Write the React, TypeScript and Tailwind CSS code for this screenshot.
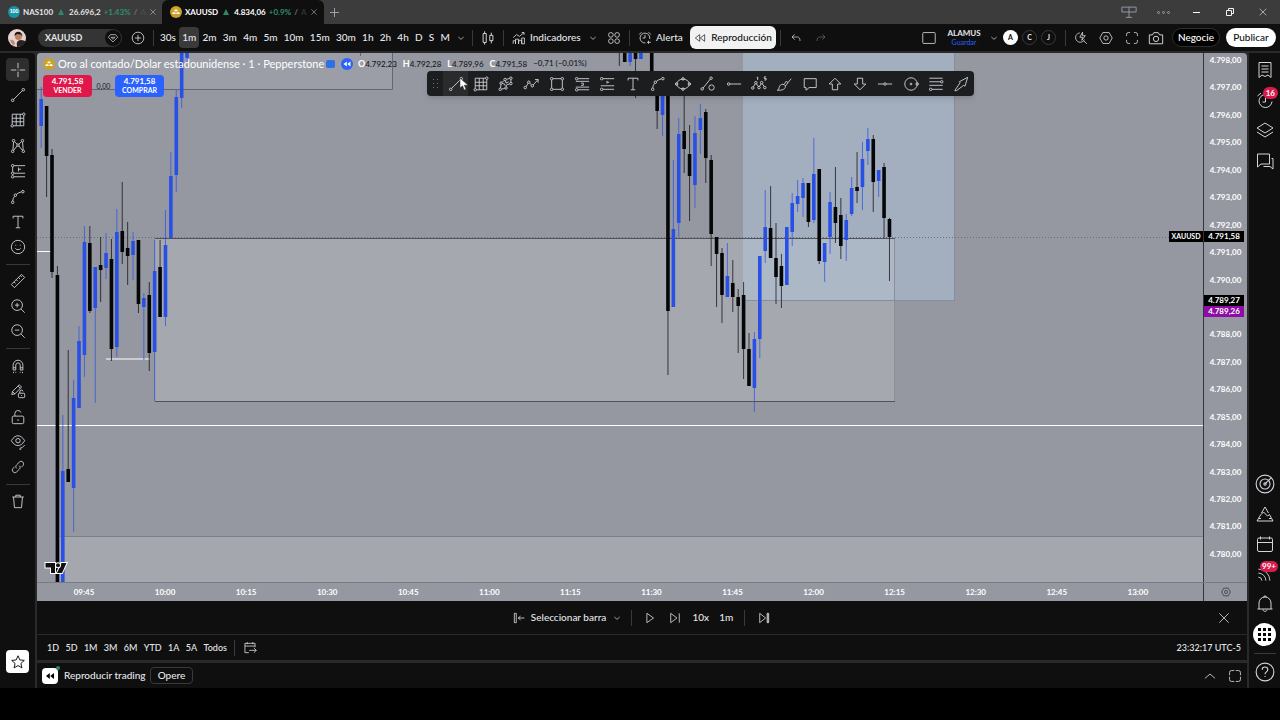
import type { ReactNode } from 'react'
import clsx from 'clsx'

// [minute index, is bullish, body top, body bottom, high, low]
type Candle = [number, 0 | 1, number, number, number, number]

const CANDLES: Candle[] = [
  [0, 1, 99, 126, 87, 148],
  [1, 0, 106, 156, 106, 197],
  [2, 0, 155, 272, 149, 278],
  [3, 0, 275, 590, 266, 590],
  [4, 1, 471, 590, 415, 590],
  [5, 0, 469, 482, 350, 482],
  [6, 1, 398, 488, 380, 532],
  [7, 1, 341, 408, 326, 408],
  [8, 1, 242, 355, 226, 377],
  [9, 0, 243, 311, 226, 313],
  [10, 1, 267, 308, 267, 403],
  [11, 0, 265, 270, 237, 302],
  [12, 1, 253, 268, 233, 279],
  [13, 0, 259, 349, 239, 361],
  [14, 1, 232, 347, 209, 357],
  [15, 0, 231, 252, 182, 264],
  [16, 0, 248, 256, 222, 285],
  [17, 1, 241, 255, 232, 280],
  [18, 0, 240, 304, 240, 313],
  [19, 1, 298, 307, 293, 360],
  [20, 0, 295, 353, 282, 371],
  [21, 1, 271, 352, 240, 401],
  [22, 0, 267, 317, 240, 317],
  [23, 1, 245, 317, 210, 326],
  [24, 1, 176, 238, 152, 238],
  [25, 1, 97, 175, 90, 192],
  [26, 1, 40, 98, 40, 108],
  [27, 1, 40, 58, 40, 62],
  [107, 0, 40, 50, 40, 66],
  [108, 0, 40, 62, 40, 62],
  [109, 1, 40, 62, 40, 66],
  [110, 0, 40, 59, 40, 98],
  [111, 1, 40, 59, 40, 59],
  [113, 0, 40, 80, 40, 90],
  [114, 0, 75, 111, 75, 129],
  [115, 1, 75, 115, 75, 136],
  [116, 0, 75, 311, 75, 375],
  [117, 1, 229, 307, 160, 307],
  [118, 1, 134, 223, 118, 237],
  [119, 0, 131, 149, 90, 173],
  [120, 0, 154, 176, 125, 221],
  [121, 1, 133, 185, 116, 208],
  [122, 1, 118, 130, 104, 154],
  [123, 0, 112, 158, 109, 183],
  [124, 0, 160, 234, 155, 266],
  [125, 0, 237, 254, 237, 307],
  [126, 0, 253, 295, 248, 323],
  [127, 1, 276, 297, 243, 297],
  [128, 0, 283, 297, 260, 312],
  [129, 0, 297, 306, 289, 353],
  [130, 0, 295, 349, 282, 379],
  [131, 0, 349, 386, 333, 386],
  [132, 1, 339, 388, 332, 412],
  [133, 1, 256, 339, 256, 358],
  [134, 1, 227, 251, 190, 263],
  [135, 0, 228, 258, 186, 258],
  [136, 0, 258, 277, 223, 304],
  [137, 0, 266, 286, 254, 308],
  [138, 1, 227, 285, 227, 285],
  [139, 1, 203, 232, 193, 246],
  [140, 1, 196, 204, 180, 212],
  [141, 1, 183, 198, 178, 217],
  [142, 0, 183, 222, 183, 227],
  [143, 1, 174, 220, 138, 223],
  [144, 0, 169, 261, 169, 264],
  [145, 1, 243, 262, 243, 282],
  [146, 1, 202, 237, 192, 254],
  [147, 0, 207, 223, 167, 243],
  [148, 0, 215, 246, 198, 259],
  [149, 1, 220, 240, 214, 261],
  [150, 1, 188, 214, 177, 216],
  [151, 0, 187, 191, 152, 203],
  [152, 1, 159, 187, 142, 210],
  [153, 1, 139, 151, 128, 165],
  [154, 0, 139, 182, 135, 212],
  [155, 1, 170, 181, 170, 197],
  [156, 0, 167, 218, 163, 238],
  [157, 0, 219, 237, 218, 281],
]

// 4.789,00 is left blank, the price tags sit there
const PRICES = Array.from({ length: 19 }, (_, i) => (i === 9 ? '' : `4.${798 - i},00`))
const TIMES = [
  '09:45', '10:00', '10:15', '10:30', '10:45', '11:00', '11:15',
  '11:30', '11:45', '12:00', '12:15', '12:30', '12:45', '13:00',
]
const INTERVALS = ['30s', '1m', '2m', '3m', '4m', '5m', '10m', '15m', '30m', '1h', '2h', '4h', 'D', 'S', 'M']
const RANGES = ['1D', '5D', '1M', '3M', '6M', 'YTD', '1A', '5A', 'Todos']

const dot = (cx: number, cy: number, r = 1.4) => <circle cx={cx} cy={cy} r={r} />

// every glyph is drawn on an 18x18 grid with a 1px stroke
const GLYPHS: Record<string, ReactNode> = {
  cross: <path d="M9 1v6M9 11v6M1 9h6M11 9h6M8.5 9h1" />,
  trend: <>{dot(3, 15)}{dot(15, 3)}<path d="M4 14 14 4" /></>,
  fibGrid: <><path d="M2.5 2.5v11.500M4 15.500h11.500V4M2.500 2.500H14M2.500 7h13M2.500 11h13M7 2.500v13M11.500 2.500v13" />{dot(15.5, 2.5)}{dot(2.5, 15.5)}</>,
  pattern: <>{dot(4, 3)}{dot(14, 3)}{dot(3, 15)}{dot(15, 15)}{dot(9, 8)}<path d="M4 4.500 3.300 13.500M5 4l3 3M13 4l-3 3M14.200 4.500l.6 9M4 14l4-5M14 14l-4-5" /></>,
  forecast: <>{dot(3, 3)}{dot(3, 11.5)}{dot(3, 15.5)}<path d="M4.500 3H17M4.500 11.500H17M4.500 15.500H17M3 4.500V10M9.500 5v4.500M9.500 7h3" /></>,
  measureRows: <>{dot(3, 3)}{dot(3, 15.5)}<path d="M4.500 3H17M2 6h15M2 12.500h15M4.500 15.500H17M8 8h2.500v2.500H8" /></>,
  rowsAlt: <>{dot(3, 3)}{dot(3, 15)}<path d="M4.500 3H17M2 11h15M4.500 15H17M9 5.500v3M9 7h2.500" /></>,
  curve: <>{dot(3, 15)}{dot(6, 7)}{dot(14.5, 3)}<path d="M3 13.500c.2-2 1-3.800 2-5.200M7.200 6C9 4.600 11 3.600 13 3.200" /></>,
  text: <path d="M3.500 5V2.500h11V5M9 2.500v13M6.500 15.500h5" />,
  smile: <><circle cx="9" cy="9" r="7.500" /><path d="M6 10.500c.8 2 5.200 2 6 0M6.500 6.500v1M11.500 6.500v1" /></>,
  ruler: <path d="M1.500 13 13 1.500 16.500 5 5 16.500zM4.500 10l1.800 1.800M7 7.500l1.800 1.800M9.500 5l1.800 1.800M11.800 3l1.500 1.500" />,
  zoomIn: <><circle cx="8" cy="8" r="6" /><path d="m12.500 12.500 4 4M5.500 8h5M8 5.500v5" /></>,
  zoomOut: <><circle cx="8" cy="8" r="6" /><path d="m12.500 12.500 4 4M5.500 8h5" /></>,
  magnet: <path d="M3.500 13.500V8a5.500 5.500 0 0 1 11 0v5.500h-3V8a2.500 2.500 0 0 0-5 0v5.500zM3.500 11h3M11.500 11h3M4 15.500v1.500M14 15.500v1.500M6.500 15.500v1M11.500 15.500v1" />,
  pencilLock: <><path d="m2 13 .8-3.500L10.500 2l2.500 2.500-7.500 7.800zM9 3.500 11.500 6M2.800 9.500l2.700 2.800" /><rect x="9.500" y="11.500" width="7" height="5" rx="1" /><path d="M11 11.500V10a1.800 1.800 0 0 1 3.600-.5M13 13.500v1" /></>,
  lock: <><rect x="2.500" y="8" width="13" height="8.500" rx="1.500" /><path d="M5.500 8V5a3.500 3.500 0 0 1 6.800-1M9 11.500v2" /></>,
  eye: <><path d="M1.500 7.500C4 3.500 6.300 2 9 2s5 1.500 7.500 5.500C14 11.500 11.700 13 9 13S4 11.500 1.500 7.500z" /><circle cx="9" cy="7.500" r="2.500" /><path d="m11 16 2.500-.5 3-3M10.500 17l2 .2" /></>,
  link: <path d="m7.500 10.500c-1.200-1.200-1.200-2.800 0-4l3-3c1.200-1.200 2.900-1.200 4 0s1.200 2.800 0 4L12.800 9.200M10.500 7.500c1.200 1.200 1.200 2.800 0 4l-3 3c-1.200 1.200-2.900 1.200-4 0s-1.200-2.800 0-4l1.700-1.700" />,
  trash: <path d="M2.500 4.500h13M6.500 4.500v-2h5v2M4 4.500l1 12h8l1-12" />,
  star: <path d="m9 2 2.100 4.700 5 .5-3.800 3.400 1.100 5L9 13l-4.400 2.600 1.100-5L1.900 7.200l5-.5z" />,
  brushPts: <>{dot(2.5, 15)}{dot(3.5, 8)}{dot(8, 4)}{dot(14.5, 2.5)}{dot(14.5, 8.5)}{dot(9, 13.5)}<path d="m2.800 13.600.5-4.200M4.700 7.200 6.800 5M9.500 3.700l3.600-.9M14.500 4v3M13.200 9l-3 .5-1 2.500M7.600 14l-3.700.8M5 8.500l2.500.5L8 11M8.500 5.500 9 8l3-1.500" /></>,
  zigzag: <>{dot(2.5, 13)}{dot(6.5, 7)}{dot(10.5, 11)}<path d="m3.500 12 2.300-4M7.500 8l2 2M11.500 10 17 4M13.500 4H17v3.500" /></>,
  rect: <><path d="M4.500 3h9M4.500 15h9M3 4.500v9M15 4.500v9" />{dot(3, 3)}{dot(15, 3)}{dot(3, 15)}{dot(15, 15)}</>,
  ellipse: <><ellipse cx="9" cy="9" rx="7" ry="5.500" />{dot(9, 3.2)}{dot(9, 14.8)}{dot(1.8, 9)}{dot(16.2, 9)}</>,
  lineCircle: <>{dot(2.5, 14.5)}{dot(12.5, 2.5)}<path d="m3.500 13.500 8-10" /><circle cx="13" cy="13" r="3" /></>,
  hray: <>{dot(3, 9)}<path d="M4.500 9H17" /></>,
  hline: <>{dot(9, 9)}<path d="M1 9h6.500M10.500 9H17" /></>,
  waves: <>{dot(2, 13.5)}{dot(5.5, 7.5)}{dot(9, 13)}{dot(12, 7.5)}{dot(15.5, 13)}<path d="m2.700 12.200 2.100-3.500M6.200 8.800l2.100 3M9.600 11.700l1.800-3M12.700 8.800l2.100 3M7.500 1v3.500M6.500 1.500h1M17 1h-2v1.800h2v1.700h-2" /></>,
  brush: <path d="M1.500 16c2-.5 1.500-2 2.500-4.500C5 9.500 7.500 8.500 9.500 10s1 4-1 5c-2 1.200-5 1-7 1zM9 9.500 11.500 6l2 1.500L17 3M10.500 11.500l3-4" />,
  comment: <path d="M2.500 3h13.500v10H8l-3.500 3v-3h-2z" />,
  up: <path d="M9 2.500 15.500 9H12v6.500H6V9H2.500z" />,
  down: <path d="M9 15.500 2.500 9H6V2.500h6V9h3.500z" />,
  circle: <><circle cx="9" cy="9" r="7" />{dot(9, 9, 1)}{dot(16, 9)}</>,
  channel: <><path d="M1.500 2.500h15M1.500 6.500h12.500M1.500 10.500h15M4.500 15h12" />{dot(15.5, 6.5)}{dot(3, 15)}</>,
  arrow: <path d="M2 16.500 8 7.500 7 6.500 16.500 1.500 13.500 11.500 12 10.500 4 16.500M2 16.500h2" />,
  plus: <><circle cx="9" cy="9" r="7.500" /><path d="M9 5v8M5 9h8" /></>,
  chevron: <path d="m5 7.500 4 3.500 4-3.500" />,
  chevronUp: <path d="m2.500 12 6.500-5.500 6.500 5.500" />,
  candles: <path d="M3.500 4h3.500v10H3.500zM5.200 1.500V4M5.200 14v2.500M11 6h3.500v6H11zM12.700 3v3M12.700 12v3" />,
  indicators: <path d="M1.500 16.500v-4h3v4M4.500 16.500v-6h4v6M8.500 16.500v-4.500h4v4.500M12.500 16.500V9h3.500v7.500zM1.500 8.500l4.500-4 3.500 2.500 6-5M12.500 2h3v3" />,
  apps: <><circle cx="5" cy="5" r="3" /><circle cx="13" cy="5" r="3" /><circle cx="5" cy="13" r="3" /><circle cx="13" cy="13" r="3" /></>,
  alert: <path d="M13.500 12.500v4M11.500 14.500h5M9.500 15.300a6.300 6.300 0 1 1 5.600-5M9 5v4H6M1.500 4.500l3-3M13.500 1.500l3 3" />,
  rewind: <path d="M8.500 4v10L2 9zM16 4v10L9.500 9z" />,
  undo: <path d="M7 3.500 3 7.500l4 4M3 7.500h8c3 0 4 2 4 6" />,
  redo: <path d="m11 3.500 4 4-4 4M15 7.500H7c-3 0-4 2-4 6" />,
  window: <rect x="1" y="2" width="16" height="14" rx="1" />,
  quick: <path d="M7.500 2.500A6 6 0 1 0 13.500 11M12.500 12.500l4 4M11 1.500 7.500 8H11l-1 4 4.500-6H11z" />,
  settings: <><path d="M5 2h8l4 7-4 7H5L1 9z" /><circle cx="9" cy="9" r="2.800" /></>,
  fullscreen: <path d="M2 6.500v-2A2.500 2.500 0 0 1 4.500 2h2M11.500 2h2A2.500 2.500 0 0 1 16 4.500v2M16 11.500v2a2.500 2.500 0 0 1-2.500 2.500h-2M6.500 16h-2A2.500 2.500 0 0 1 2 13.500v-2" />,
  maximize: <path d="M2 8V4.500A2.500 2.500 0 0 1 4.500 2H8M10 2h3.500A2.500 2.500 0 0 1 16 4.500V8M16 10v3.500a2.500 2.500 0 0 1-2.500 2.500H10M8 16H4.500A2.500 2.500 0 0 1 2 13.500V10" />,
  camera: <><path d="M1.500 5.500h3.500l1.500-2.500h5L13 5.500h3.500v10h-15z" /><circle cx="9" cy="10" r="3" /></>,
  list: <path d="M3 1.500h12v15l-3-2.500-3 1.500-3-1.500-3 2.500zM5.500 5h7M5.500 8h7M5.500 11h7" />,
  clock: <path d="M9.500 3.500a6.500 6.500 0 1 0 6.500 7M9.500 6v5H6.500M1.500 5 5 2" />,
  layers: <path d="m9 2 8 5-8 5-8-5zM1 11l8 5 8-5" />,
  chat: <path d="M1.500 2h12v10H5l-3.500 3zM15.500 6.500H17V17l-3-2.500H7.500" />,
  radar: <><circle cx="9" cy="9" r="8" /><circle cx="9" cy="9" r="4.500" />{dot(9, 9, 1)}<path d="m9.500 8.500 5-5" /></>,
  mountain: <path d="M5.500 8 9 2l3.500 6M1 16l3.500-6 3-3 4 4 2-1.500L17 16zM3 13.500h2M13 13.500h2" />,
  calendar: <path d="M1.500 4.500A1.500 1.500 0 0 1 3 3h12a1.500 1.500 0 0 1 1.500 1.500V15a1.500 1.500 0 0 1-1.500 1.500H3A1.500 1.500 0 0 1 1.500 15zM1.500 7.500h15M4.500 1.500v3M13.500 1.500v3" />,
  feed: <path d="M1.500 12.500a4 4 0 0 1 4 4M1.500 8a8.500 8.500 0 0 1 8.500 8.500M1.500 3.500a13 13 0 0 1 13 13" />,
  bell: <path d="M3 14V8a6 6 0 0 1 12 0v6M1.500 14h15M7 14.500c0 2.500 4 2.500 4 0M7.500 2.200c0-1.600 3-1.600 3 0" />,
  help: <><circle cx="9" cy="9" r="8" /><path d="M6.500 7c0-3.300 5-3.300 5 0 0 2-2.500 1.800-2.500 4M9 12.500v1" /></>,
  play: <path d="M5 3v12l8.500-6z" />,
  step: <path d="M3.500 3v12l8-6zM14.500 3v12" />,
  end: <path d="M3.500 3v12l7.500-6zM13 3h2v12h-2zM14 3v12" />,
  selectBar: <path d="M3 3h2.500v12H3zM8 9h8M11 6.500 8 9l3 2.500" />,
  goTo: <path d="M15.500 8V3h-13v12h5M2.500 6.500h13M5.500 1.500V4M12.500 1.500V4M8 12h9M14 9l3 3-3 3" />,
  close: <path d="m3 3 12 12M15 3 3 15" />,
  gem: <path d="M5 4h8l3 4-7 7-7-7zM6 8h6l-3 3z" />,
  layout: <path d="M1 3.500h16V9H1zM9 3.500V15M5.500 15h7" />,
}

function Icon({ name, className = 'size-4' }: { name: string; className?: string }) {
  return (
    <svg viewBox="0 0 18 18" fill="none" stroke="currentColor" className={clsx('shrink-0', className)} aria-hidden="true">
      {GLYPHS[name]}
    </svg>
  )
}

function IconButton({ name, label, className, icon }: { name: string; label: string; className?: string; icon?: string }) {
  return (
    <button aria-label={label} className={clsx('flex items-center justify-center', className)}>
      <Icon name={name} className={icon} />
    </button>
  )
}

function Divider() {
  return <span className="h-4 w-px shrink-0 bg-[#3a3a3a]" />
}

function GoldIcon() {
  return (
    <svg viewBox="0 0 12 12" className="size-3 shrink-0" aria-hidden="true">
      <circle cx="6" cy="6" r="6" fill="#c9a227" />
      <path d="M4.800 3.500h2.400l.6 1.800H4.200zM2.900 6.200h2.400l.4 1.800H2.200zM6.700 6.200h2.400L9.800 8H6.300z" fill="#fff" />
    </svg>
  )
}

function Tab({ icon, name, price, change, active }: { icon: ReactNode; name: string; price: string; change: string; active?: boolean }) {
  return (
    <div
      className={clsx(
        'flex h-full w-[162px] items-center pr-[2px] pl-2 text-[8px] font-bold',
        active ? 'rounded-t-md bg-[#0f0f0f] text-white' : 'text-gray-200',
      )}
    >
      {icon}
      <div className="ml-[3px] flex flex-1 items-center gap-[3px] whitespace-nowrap">
        <span>{name}</span>
        <svg viewBox="0 0 6 6" className="mx-0.5 size-1.5 shrink-0" aria-hidden="true">
          <path d="M3 0 6 6H0z" fill="#2a8a6a" />
        </svg>
        <span>{price}</span>
        <span className="text-[#2f8f6c]">{change}</span>
        <span className="text-gray-500">/</span>
        <span className={active ? 'text-[#333333]' : 'text-[#4a4a4a]'}>A</span>
      </div>
      <IconButton name="close" label={`Cerrar ${name}`} className="size-4 text-gray-200" icon="size-2" />
    </div>
  )
}

function TitleBar() {
  return (
    <div className="flex h-6 items-center bg-[#3c3c3c] text-gray-300">
      <Tab
        icon={
          <span className="flex size-3 shrink-0 items-center justify-center rounded-full bg-[#1795a5] text-[5px] font-black text-white">
            100
          </span>
        }
        name="NAS100"
        price="26.696,2"
        change="+1.43%"
      />
      <Tab active icon={<GoldIcon />} name="XAUUSD" price="4.834,06" change="+0.9%" />
      <button aria-label="Nueva pestaña" className="px-[6px] text-gray-400">
        <svg viewBox="0 0 9 9" className="size-[9px]" stroke="currentColor" aria-hidden="true">
          <path d="M4.500 0v9M0 4.500h9" />
        </svg>
      </button>
      <div className="ml-auto flex items-center">
        <IconButton name="layout" label="Diseño" className="w-8 text-gray-400" />
        <Divider />
        <button aria-label="Más" className="flex w-[34px] justify-center gap-0.5">
          <span className="size-[3px] rounded-full border border-gray-400" />
          <span className="size-[3px] rounded-full border border-gray-400" />
          <span className="size-[3px] rounded-full border border-gray-400" />
        </button>
        <button aria-label="Minimizar" className="flex w-[33px] justify-center">
          <span className="h-px w-[7px] bg-white" />
        </button>
        <button aria-label="Restaurar" className="flex w-[33px] justify-center text-gray-100">
          <svg viewBox="0 0 8 8" className="size-2" fill="none" stroke="currentColor" aria-hidden="true">
            <path d="M.5 2.500h5v5h-5zM2.500 2.500v-2h5v5h-2" />
          </svg>
        </button>
        <IconButton name="close" label="Cerrar" className="w-[34px] text-white" icon="size-2.5" />
      </div>
    </div>
  )
}

function Header() {
  return (
    <header className="flex h-[27px] items-center bg-[#0f0f0f] text-[10px] font-medium text-gray-200">
      <button aria-label="Perfil" className="ml-2 size-[18px] shrink-0">
        <svg viewBox="0 0 18 18" aria-hidden="true">
          <circle cx="9" cy="9" r="9" fill="#e6d3cd" />
          <path d="M9 17c-1-4 1-6 4-6 2 0 4 1 4.500 1.500A9 9 0 0 1 9 18z" fill="#2b2321" />
          <circle cx="10.500" cy="7.500" r="3.500" fill="#b98266" />
          <path d="M6.500 7C6 1.500 14.500 1 14.500 7.500L13 5.500 9 5z" fill="#1d1614" />
          <path d="M2 11c2-1 4 0 5 3l-1 3a9 9 0 0 1-4-6z" fill="#c08a7a" />
        </svg>
      </button>
      <button className="ml-3 flex h-[18px] w-[84px] shrink-0 items-center justify-between rounded-full bg-[#343434] pr-px pl-[7px] text-[9px] font-bold text-gray-200">
        XAUUSD
        <span className="flex size-4 items-center justify-center rounded-full bg-[#0f0f0f]">
          <Icon name="gem" className="size-3" />
        </span>
      </button>
      <IconButton name="plus" label="Comparar" className="w-[31px] shrink-0" icon="size-3.5" />
      <Divider />
      <nav className="ml-[6px] flex w-[290px] shrink-0 items-center justify-between">
        {INTERVALS.map((t) => (
          <button key={t} className={clsx(t === '1m' && '-mx-[3px] rounded bg-[#3a3a3a] px-[3px] py-[3px]')}>
            {t}
          </button>
        ))}
      </nav>
      <IconButton name="chevron" label="Más intervalos" className="w-[22px] shrink-0" icon="size-3" />
      <Divider />
      <IconButton name="candles" label="Tipo de gráfico" className="w-[30px] shrink-0" />
      <Divider />
      <button className="ml-[8px] flex w-[70px] shrink-0 items-center gap-1">
        <Icon name="indicators" className="size-3.5" />
        Indicadores
      </button>
      <IconButton name="chevron" label="Favoritos" className="w-[22px] shrink-0" icon="size-3" />
      <IconButton name="apps" label="Plantillas" className="w-[20px] shrink-0" icon="size-3.5" />
      <span className="w-[5px]" />
      <Divider />
      <button className="ml-[8px] flex w-[52px] shrink-0 items-center gap-1">
        <Icon name="alert" className="size-3.5" />
        Alerta
      </button>
      <button className="flex h-[23px] w-[86px] shrink-0 items-center justify-center gap-[5px] rounded-md bg-[#f2f2f2] text-[#0f0f0f]">
        <Icon name="rewind" className="size-3" />
        Reproducción
      </button>
      <span className="w-[4px]" />
      <Divider />
      <IconButton name="undo" label="Deshacer" className="ml-[2px] w-[25px] shrink-0" icon="size-3" />
      <IconButton name="redo" label="Rehacer" className="w-[25px] shrink-0 text-gray-500" icon="size-3" />

      <div className="ml-auto flex items-center pr-1">
        <IconButton name="window" label="Disposición" className="w-[30px]" icon="size-3.5" />
        <button className="w-10 text-center text-[8px] leading-[9px] font-bold">
          <span className="block">ALAMUS</span>
          <span className="block text-[7px] font-normal text-[#2962ff]">Guardar</span>
        </button>
        <IconButton name="chevron" label="Gestionar diseños" className="w-[19px]" icon="size-3" />
        <div className="flex gap-1 text-[7px] font-bold">
          <button className="size-[15px] rounded-full bg-white text-black">A</button>
          <button className="size-[15px] rounded-full border border-[#3a3a3a]">C</button>
          <button className="size-[15px] rounded-full border border-[#3a3a3a]">J</button>
        </div>
        <span className="w-[9px]" />
        <Divider />
        <div className="mr-[4px] ml-[2px] flex">
          <IconButton name="quick" label="Búsqueda rápida" className="w-[25px]" icon="size-3.5" />
          <IconButton name="settings" label="Configuración" className="w-[26px]" icon="size-3.5" />
          <IconButton name="fullscreen" label="Pantalla completa" className="w-[25px]" icon="size-3.5" />
          <IconButton name="camera" label="Captura" className="w-[24px]" />
        </div>
        <button className="h-[19px] w-12 rounded-full border border-[#2e2e2e] bg-black text-white">Negocie</button>
        <button className="ml-[6px] h-[19px] w-[50px] rounded-full bg-white text-[#0f0f0f]">Publicar</button>
      </div>
    </header>
  )
}

function ToolGroup({ items, className }: { items: [string, string][]; className: string }) {
  return (
    <div className={clsx('flex w-full flex-col items-center', className)}>
      {items.map(([name, label]) => (
        <div key={label} className="flex flex-1 items-center">
          <IconButton name={name} label={label} className={clsx('size-[23px] rounded', name === 'cross' && 'bg-[#2e2e2e]')} />
        </div>
      ))}
    </div>
  )
}

function LeftBar() {
  return (
    <aside className="flex w-[35px] shrink-0 flex-col items-center rounded-tr bg-[#0f0f0f] pt-1 pb-[15px] text-gray-300">
      <ToolGroup
        className="h-[203px]"
        items={[
          ['cross', 'Cursor'],
          ['trend', 'Línea de tendencia'],
          ['fibGrid', 'Gann y Fibonacci'],
          ['pattern', 'Patrones'],
          ['forecast', 'Predicción'],
          ['curve', 'Curvas'],
          ['text', 'Texto'],
          ['smile', 'Iconos'],
        ]}
      />
      <div className="flex h-2 items-center"><span className="h-px w-6 bg-[#3a3a3a]" /></div>
      <ToolGroup className="h-[76px]" items={[['ruler', 'Medir'], ['zoomIn', 'Acercar'], ['zoomOut', 'Alejar']]} />
      <div className="flex h-[9px] items-center"><span className="h-px w-6 bg-[#3a3a3a]" /></div>
      <ToolGroup
        className="h-[127px]"
        items={[
          ['magnet', 'Imán'],
          ['pencilLock', 'Modo dibujo'],
          ['lock', 'Bloquear'],
          ['eye', 'Ocultar'],
          ['link', 'Sincronizar'],
        ]}
      />
      <div className="flex h-2 items-center"><span className="h-px w-6 bg-[#3a3a3a]" /></div>
      <ToolGroup className="h-[25px]" items={[['trash', 'Eliminar']]} />
      <IconButton name="star" label="Herramientas favoritas" className="mt-auto size-[23px] rounded bg-white text-black" />
    </aside>
  )
}

function RightBar() {
  const cell = 'h-[30px] w-full'
  return (
    <aside className="flex w-[31px] shrink-0 flex-col items-center bg-[#0f0f0f] pt-0.5 pb-px text-gray-300">
      <IconButton name="list" label="Lista de seguimiento" className={cell} icon="size-[18px]" />
      <div className="relative w-full">
        <IconButton name="clock" label="Alertas" className={cell} icon="size-[18px]" />
        <span className="absolute top-0.5 right-0.5 rounded-full bg-[#d81b4a] px-[3px] text-[8px] leading-[12px] font-bold text-white">16</span>
      </div>
      <IconButton name="layers" label="Datos" className={cell} icon="size-[18px]" />
      <IconButton name="chat" label="Chats" className="h-[32px] w-full" icon="size-[18px]" />
      <span className="flex-1" />
      <IconButton name="radar" label="Analizadores" className={cell} icon="size-5" />
      <IconButton name="mountain" label="Pine" className={cell} icon="size-[18px]" />
      <IconButton name="calendar" label="Calendarios" className={cell} icon="size-[18px]" />
      <div className="relative w-full">
        <IconButton name="feed" label="Noticias" className={cell} />
        <span className="absolute top-0.5 right-0.5 rounded-full bg-[#d81b4a] px-0.5 text-[8px] leading-[11px] font-bold text-white">99+</span>
      </div>
      <IconButton name="bell" label="Notificaciones" className={cell} icon="size-[18px]" />
      <button aria-label="Productos" className="flex h-[30px] items-center">
        <span className="grid size-[23px] grid-cols-[3px_3px_3px] place-content-center gap-0.5 rounded-full bg-white">
          {Array.from({ length: 9 }, (_, i) => (
            <span key={i} className="size-[3px] bg-black" />
          ))}
        </span>
      </button>
      <div className="flex h-2 items-center"><span className="h-px w-[22px] bg-[#3a3a3a]" /></div>
      <IconButton name="help" label="Ayuda" className={cell} icon="size-5" />
    </aside>
  )
}

function Plot() {
  return (
    <svg viewBox="37 53 1166 529" preserveAspectRatio="xMinYMin slice" className="absolute inset-0 size-full" aria-label="Gráfico XAUUSD" role="img">
      <rect x="37" y="53" width="356" height="37" fill="#9b9ea7" />
      <path d="M37 89.500h355.500V53M360.500 53v3" fill="none" stroke="#63666f" />
      <rect x="155" y="238" width="740" height="163.500" fill="#a5a8ae" />
      <rect x="743" y="53" width="212" height="248" fill="#a3aebe" />
      <rect x="743" y="238" width="152" height="63" fill="#adb8c7" />
      <path d="M743 300.500h212M954.500 53v248" fill="none" stroke="#858e9e" />
      <path d="M894.500 238v163M154.500 238v163" stroke="#8d8f96" />
      <path d="M155 238.500h740M155 401.500h740" stroke="#50535b" />
      <rect x="60" y="537" width="1143" height="46" fill="#a4a7ae" />
      <path d="M60 536.500h1143" stroke="#7d8088" />
      <path d="M37 425.500h1166M37 251.500h14" stroke="#fff" />
      <path d="M106 359h44" stroke="#dcdee3" strokeWidth="1.500" />
      <path d="M37 237.500h1133" stroke="#6c6f78" strokeDasharray="1 2" />
      {CANDLES.map(([i, up, top, bottom, high, low]) => {
        const x = 41.2 + i * 5.403
        return (
          <g key={i} fill={up ? '#2850e6' : '#050608'}>
            <rect x={x - 0.5} y={high} width="1" height={low - high} opacity=".7" />
            <rect x={x - 1.8} y={top} width="3.600" height={bottom - top} />
          </g>
        )
      })}
    </svg>
  )
}

const DRAW_TOOLS = [
  'trend', 'fibGrid', 'brushPts', 'zigzag', 'rect', 'measureRows', 'rowsAlt', 'text', 'curve', 'ellipse', 'lineCircle',
  'hray', 'waves', 'brush', 'comment', 'up', 'down', 'hline', 'circle', 'channel', 'arrow',
]

function DrawingToolbar() {
  return (
    <div className="absolute top-[18px] left-[390px] flex h-[25px] w-[547px] items-center rounded bg-[#1c1d1f] text-gray-300 shadow-md">
      <span className="ml-[6px] grid w-[10px] grid-cols-[1px_1px] gap-[3px]">
        {Array.from({ length: 6 }, (_, i) => (
          <span key={i} className="size-px bg-gray-500" />
        ))}
      </span>
      {DRAW_TOOLS.map((name, i) => (
        <IconButton key={name} name={name} label={name} className={clsx('h-full flex-1', i === 0 && 'bg-[#2a2b2d]')} />
      ))}
      <svg viewBox="0 0 10 14" className="absolute top-[6px] left-[32px] h-3.5 w-2.5" aria-hidden="true">
        <path d="M1 1v10l2.500-2.200L5.200 13l1.800-.8L5.300 8.200H9z" fill="#fff" stroke="#222" strokeWidth=".5" />
      </svg>
    </div>
  )
}

function Legend() {
  const values = [['O', '4.792,23'], ['H', '4.792,28'], ['L', '4.789,96'], ['C', '4.791,58']]
  return (
    <div className="absolute top-[3px] left-[6px]">
      <div className="flex h-4 items-center whitespace-nowrap">
        <GoldIcon />
        <h1 className="ml-[3px] w-[264px] text-[11px] font-normal text-white">
          Oro al contado/Dólar estadounidense · 1 · Pepperstone
        </h1>
        <span className="ml-1 h-2 w-[9px] rounded-xs bg-[#2f6fe4]" />
        <span className="ml-[6px] flex size-3 items-center justify-center rounded-full bg-[#2962ff] text-white">
          <svg viewBox="0 0 8 8" className="size-2" fill="currentColor" aria-hidden="true">
            <path d="M3.800 1.500v5L.5 4zM7.500 1.500v5L4.200 4z" />
          </svg>
        </span>
        <div className="ml-[5px] flex gap-[6px] text-[8px] font-medium text-[#16181d]">
          {values.map(([k, v]) => (
            <span key={k}>
              <b className="text-[9px] text-white">{k}</b>
              {v}
            </span>
          ))}
          <span>−0,71 (−0,01%)</span>
        </div>
      </div>
      <div className="mt-[3px] flex items-center text-[8px] leading-[9px] font-bold text-white">
        <button className="h-[22px] w-[49px] rounded bg-[#e0174a]">
          <span className="block">4.791,58</span>
          <span className="block text-[7px]">VENDER</span>
        </button>
        <span className="w-[23px] text-center text-[7px] font-normal text-[#16181d]">0,00</span>
        <button className="h-[22px] w-[49px] rounded bg-[#2962ff]">
          <span className="block">4.791,58</span>
          <span className="block text-[7px]">COMPRAR</span>
        </button>
      </div>
    </div>
  )
}

function Chart() {
  return (
    <section className="flex min-h-0 flex-1 flex-col rounded-t bg-[#9598a1] text-[8px] font-bold text-white">
      <div className="flex min-h-0 flex-1">
        <div className="relative flex-1 overflow-hidden rounded-tl">
          <Plot />
          <Legend />
          <DrawingToolbar />
          <span className="absolute top-[178px] right-0 w-[34px] bg-black text-center text-[7px] leading-[11px]">XAUUSD</span>
          <svg viewBox="0 0 26 16" className="absolute bottom-[6px] left-[6px] h-4 w-[26px]" aria-hidden="true">
            <g fill="#111" stroke="#fff" strokeWidth="2" style={{ paintOrder: 'stroke' }}>
              <path d="M2.500 3h9.500v10H8V7.500H2.500z" />
              <path d="M18.500 3H23.500L19 13H14z" />
              <circle cx="15" cy="5.200" r="2" />
            </g>
          </svg>
        </div>
        <div className="relative flex w-11 flex-col items-center justify-between border-l border-[#33363d] pb-[21px]">
          {PRICES.map((p, i) => (
            <span key={i} className="h-[14px] leading-[14px]">{p}</span>
          ))}
          <span className="absolute top-[178px] left-0 w-10 bg-black text-center leading-[11px]">4.791,58</span>
          <span className="absolute top-[242px] left-0 w-10 bg-black text-center leading-[11px]">4.789,27</span>
          <span className="absolute top-[253px] left-0 w-10 bg-[#8e0da5] text-center leading-[11px]">4.789,26</span>
        </div>
      </div>
      <div className="flex h-[19px] border-t border-[#777a83]">
        <div className="flex flex-1 items-center justify-between pr-[45px] pl-[27px]">
          {TIMES.map((t) => (
            <span key={t} className="w-10 text-center">{t}</span>
          ))}
        </div>
        <IconButton name="settings" label="Ajustes de escala" className="w-11 border-l border-[#33363d] text-[#16181d]" icon="size-2.5" />
      </div>
    </section>
  )
}

function ReplayBar() {
  return (
    <div className="relative flex h-[33px] items-center justify-center bg-[#0f0f0f] pl-[4px] text-[10px] font-medium text-gray-200">
      <button className="flex items-center gap-[5px]">
        <Icon name="selectBar" className="size-3.5" />
        Seleccionar barra
        <Icon name="chevron" className="size-3" />
      </button>
      <span className="w-2" />
      <Divider />
      <IconButton name="play" label="Reproducir" className="ml-[5px] w-[25px]" icon="size-3.5" />
      <IconButton name="step" label="Avanzar" className="w-[26px]" icon="size-3.5" />
      <button className="w-[25px]">10x</button>
      <button className="w-[26px]">1m</button>
      <span className="w-[5px]" />
      <Divider />
      <IconButton name="end" label="Ir al final" className="ml-[6px] w-[25px]" icon="size-3.5" />
      <IconButton name="close" label="Cerrar reproducción" className="absolute right-[15px] size-4" icon="size-3.5" />
    </div>
  )
}

export default function App() {
  return (
    <div className="flex h-screen min-h-[480px] flex-col bg-black font-['Lato',sans-serif]">
      <TitleBar />
      <div className="flex min-h-0 flex-1 flex-col gap-0.5 bg-[#2a2a2a]">
        <Header />
        <div className="flex min-h-0 flex-1 gap-0.5">
          <LeftBar />
          <main className="flex min-w-0 flex-1 flex-col">
            <Chart />
            <ReplayBar />
            <div className="mt-px flex h-[25px] items-center bg-[#0f0f0f] pr-[6px] pl-[10px] text-[9px] font-medium text-gray-200">
              <div className="flex w-[180px] items-center justify-between">
                {RANGES.map((r) => (
                  <button key={r}>{r}</button>
                ))}
              </div>
              <span className="w-[7px]" />
              <Divider />
              <IconButton name="goTo" label="Ir a" className="w-[30px]" icon="size-3.5" />
              <button className="ml-auto">23:32:17 UTC-5</button>
            </div>
            <div className="mt-[3px] flex h-[25px] items-center bg-[#0f0f0f] pl-[5px] text-[10px] font-medium text-gray-200">
              <span className="relative mr-[6px] flex size-4 items-center justify-center rounded bg-white text-black">
                <svg viewBox="0 0 8 8" className="size-2" fill="currentColor" aria-hidden="true">
                  <path d="M3.800 1v6L0 4zM8 1v6L4.200 4z" />
                </svg>
                <span className="absolute -top-0.5 -right-0.5 size-1 rounded-full bg-[#2a8a6a]" />
              </span>
              <span className="w-[78px] whitespace-nowrap">Reproducir trading</span>
              <button className="ml-2 h-[17px] w-[43px] rounded border border-[#3a3a3a]">Opere</button>
              <IconButton name="chevronUp" label="Expandir" className="ml-auto w-6" icon="size-3.5" />
              <IconButton name="maximize" label="Maximizar" className="w-[25px]" icon="size-3.5" />
            </div>
          </main>
          <RightBar />
        </div>
      </div>
      <div className="h-8 shrink-0 bg-black" />
    </div>
  )
}
